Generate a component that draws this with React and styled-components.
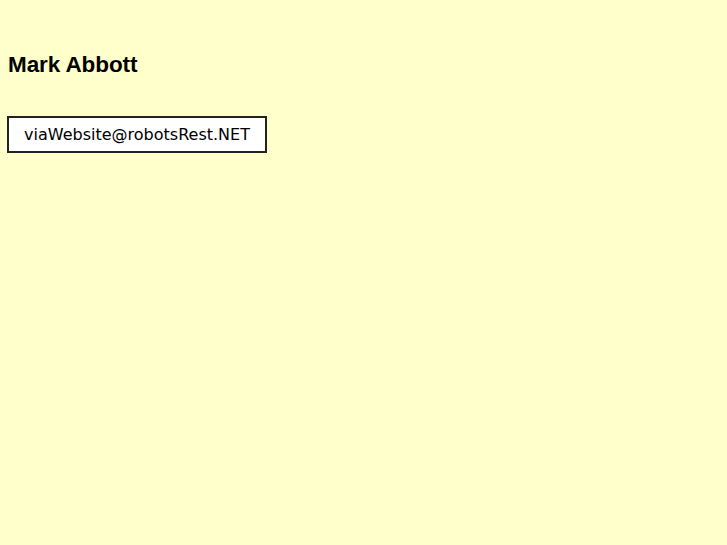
import React from "react";
import styled, { createGlobalStyle } from "styled-components";

const Global = createGlobalStyle`
  html, body { margin: 0; padding: 0; background: #FFFFCC; }
  body { min-height: 545px; }
`;

const Page = styled.div`
  padding: 52px 7px 0 7px;
  display: flex;
  flex-direction: column;
  align-items: flex-start;
`;

const Name = styled.h1`
  margin: 0 0 0 1px;
  font-family: "Liberation Sans", Arial, sans-serif;
  font-weight: bold;
  font-size: 22.5px;
  letter-spacing: -0.1px;
  line-height: 26px;
  color: #000;
`;

const EmailBox = styled.div`
  margin-top: 38px;
  box-sizing: border-box;
  width: 260px;
  height: 37px;
  border: 2px solid #222;
  background: #fff;
  display: flex;
  align-items: center;
  justify-content: center;
  font-family: "DejaVu Sans", Verdana, sans-serif;
  font-size: 16px;
  color: #000;
`;

export default function App() {
  return (
    <>
      <Global />
      <Page>
        <Name>Mark Abbott</Name>
        <EmailBox>viaWebsite@robotsRest.NET</EmailBox>
      </Page>
    </>
  );
}
